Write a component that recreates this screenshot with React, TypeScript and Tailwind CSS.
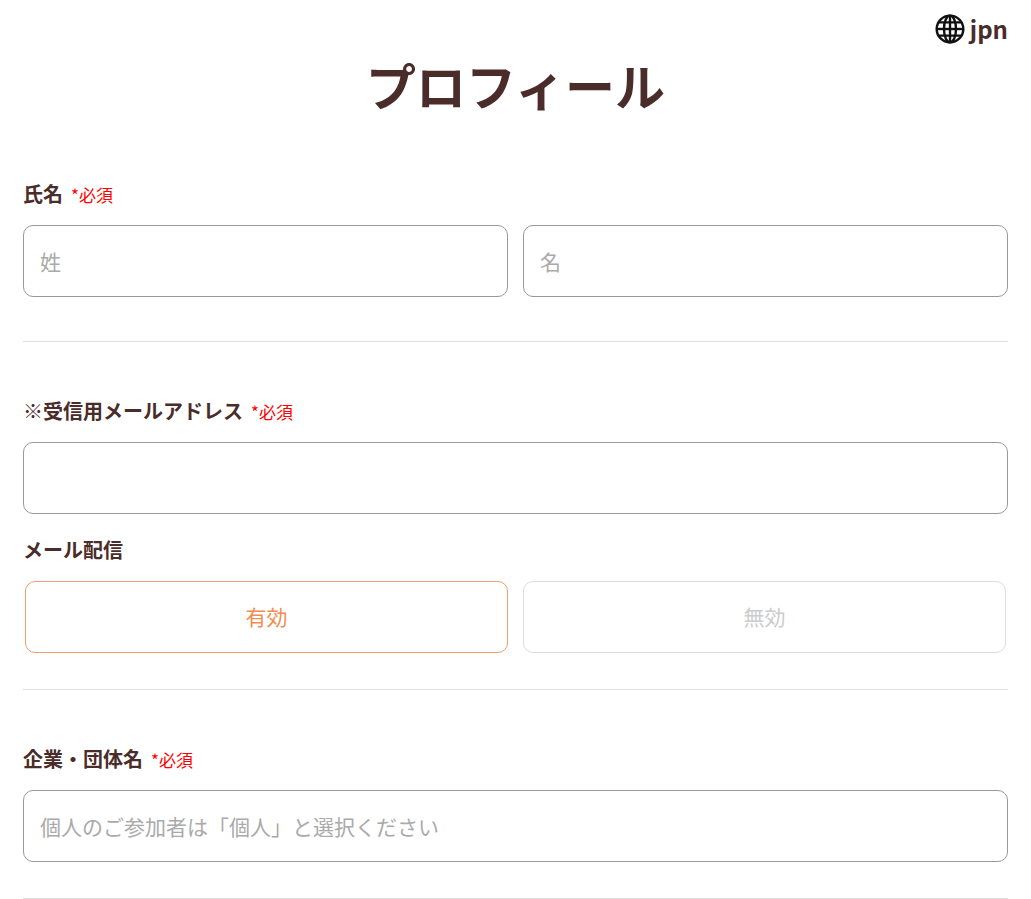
const font = { fontFamily: '"Noto Sans CJK JP", "Noto Sans", sans-serif' };

const Req = () => <span className="ml-2 text-[17px] font-normal text-[#ff0000]">*必須</span>;

export default function App() {
  return (
    <div className="bg-white px-[23px] text-[#4a2c2a]" style={font}>
      <div className="flex h-[58px] items-center justify-end gap-1">
        <svg width="32" height="32" viewBox="0 0 24 24" fill="none" stroke="#111" strokeWidth="1.8">
          <circle cx="12" cy="12" r="10" />
          <ellipse cx="12" cy="12" rx="4.5" ry="10" />
          <line x1="12" y1="2" x2="12" y2="22" />
          <line x1="2" y1="12" x2="22" y2="12" />
          <path d="M3.5 7h17M3.5 17h17" />
        </svg>
        <span className="text-[24px] font-bold leading-none">jpn</span>
      </div>
      <h1 className="mt-[-6px] text-center text-[50px] font-bold leading-[64px]">プロフィール</h1>

      <div className="mt-[64px] text-[20px] font-bold leading-7">氏名<Req /></div>
      <div className="mt-[16px] flex gap-[15px]">
        <input placeholder="姓" className="h-[72px] flex-1 rounded-[10px] border border-[#999] px-4 text-[21px] placeholder-[#aaa] outline-none" />
        <input placeholder="名" className="h-[72px] flex-1 rounded-[10px] border border-[#999] px-4 text-[21px] placeholder-[#aaa] outline-none" />
      </div>
      <hr className="mt-11 border-[#e0e0e0]" />

      <div className="mt-[55px] text-[20px] font-bold leading-7">※受信用メールアドレス<Req /></div>
      <input className="mt-[16px] block h-[72px] w-full rounded-[10px] border border-[#999] px-4 text-[21px] outline-none" />
      <div className="mt-[22px] text-[20px] font-bold leading-7">メール配信</div>
      <div className="mt-[17px] flex gap-[15px] px-[2px]">
        <button className="h-[72px] flex-1 rounded-[10px] border border-[#f0a070] text-[21px] text-[#f08c50]">有効</button>
        <button className="h-[72px] flex-1 rounded-[10px] border border-[#ddd] text-[21px] text-[#ccc]">無効</button>
      </div>
      <hr className="mt-9 border-[#e0e0e0]" />

      <div className="mt-[55px] text-[20px] font-bold leading-7">企業・団体名<Req /></div>
      <input placeholder="個人のご参加者は「個人」と選択ください" className="mt-[16px] block h-[72px] w-full rounded-[10px] border border-[#999] px-4 text-[21px] placeholder-[#aaa] outline-none" />
      <hr className="mt-9 border-[#e0e0e0]" />
    </div>
  );
}
